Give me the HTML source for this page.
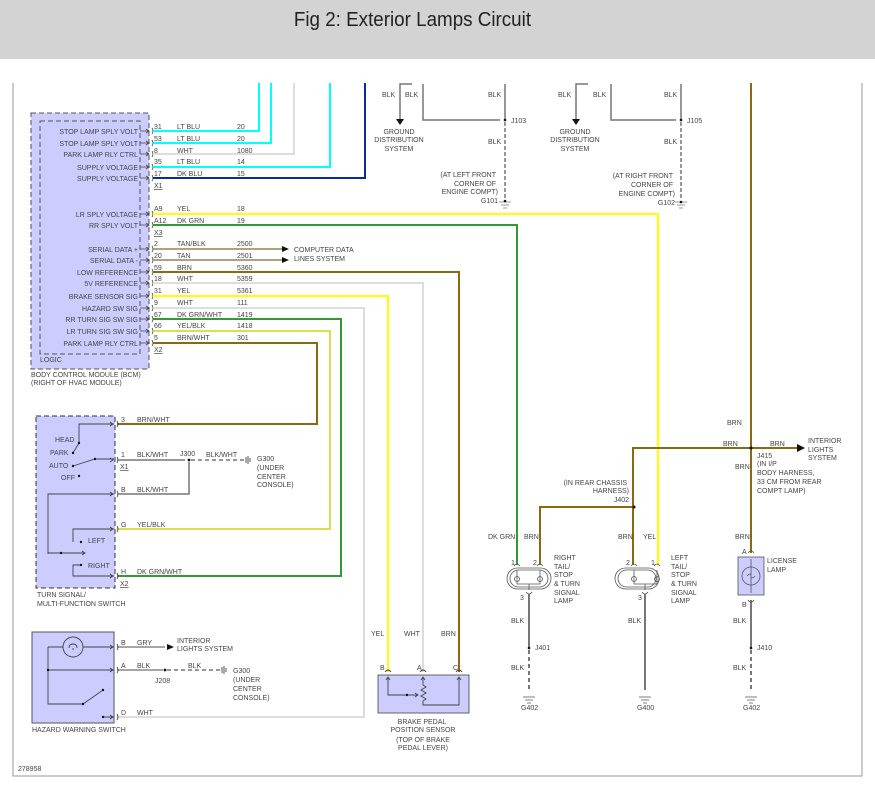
<!DOCTYPE html>
<html><head><meta charset="utf-8"><style>
html,body{margin:0;padding:0;background:#fff;width:875px;height:797px;overflow:hidden}
#hdr{position:absolute;left:0;top:0;width:875px;height:59px;background:#d3d3d3}
#ttl{position:absolute;left:0;width:825px;top:9px;text-align:center;font:20px "Liberation Sans Narrow","Liberation Sans",sans-serif;color:#222;transform:scaleX(0.94);transform-origin:412px 0}
svg{position:absolute;left:0;top:0}
text{font-family:"Liberation Sans",sans-serif;font-size:7px;fill:#444}
.r{text-anchor:end}.m{text-anchor:middle}
</style></head><body>
<div id="hdr"><div id="ttl">Fig 2: Exterior Lamps Circuit</div></div>
<svg width="875" height="797" viewBox="0 0 875 797">
<path d="M13 83V776H862V83" fill="none" stroke="#999" stroke-width="1"/>
<rect x="31" y="113" width="118" height="256" fill="#ccccff" stroke="#555" stroke-dasharray="5,3"/>
<rect x="40" y="121" width="100" height="233" fill="none" stroke="#555" stroke-dasharray="5,3"/>
<text x="40" y="362">LOGIC</text>
<text x="31" y="377">BODY CONTROL MODULE (BCM)</text>
<text x="31" y="385">(RIGHT OF HVAC MODULE)</text>
<g class="r">
<text class="r" x="138" y="134">STOP LAMP SPLY VOLT</text>
<text class="r" x="138" y="146">STOP LAMP SPLY VOLT</text>
<text class="r" x="138" y="157">PARK LAMP RLY CTRL</text>
<text class="r" x="138" y="170">SUPPLY VOLTAGE</text>
<text class="r" x="138" y="181">SUPPLY VOLTAGE</text>
<text class="r" x="138" y="217">LR SPLY VOLTAGE</text>
<text class="r" x="138" y="228">RR SPLY VOLT</text>
<text class="r" x="138" y="252">SERIAL DATA +</text>
<text class="r" x="138" y="263">SERIAL DATA -</text>
<text class="r" x="138" y="275">LOW REFERENCE</text>
<text class="r" x="138" y="286">5V REFERENCE</text>
<text class="r" x="138" y="299">BRAKE SENSOR SIG</text>
<text class="r" x="138" y="311">HAZARD SW SIG</text>
<text class="r" x="138" y="322">RR TURN SIG SW SIG</text>
<text class="r" x="138" y="334">LR TURN SIG SW SIG</text>
<text class="r" x="138" y="346">PARK LAMP RLY CTRL</text>
</g>
<g stroke="#444" fill="none" stroke-width="0.8">
<path d="M140 131h9M146 129l3 2-3 2M152 128q2 3 0 6M140 143h9M146 141l3 2-3 2M152 140q2 3 0 6M140 154h9M146 152l3 2-3 2M152 151q2 3 0 6M140 167h9M146 165l3 2-3 2M152 164q2 3 0 6M140 178h9M146 176l3 2-3 2M152 175q2 3 0 6M140 214h9M146 212l3 2-3 2M152 211q2 3 0 6M140 225h9M146 223l3 2-3 2M152 222q2 3 0 6M140 249h9M146 247l3 2-3 2M152 246q2 3 0 6M140 260h9M146 258l3 2-3 2M152 257q2 3 0 6M140 272h9M146 270l3 2-3 2M152 269q2 3 0 6M140 283h9M146 281l3 2-3 2M152 280q2 3 0 6M140 296h9M146 294l3 2-3 2M152 293q2 3 0 6M140 308h9M146 306l3 2-3 2M152 305q2 3 0 6M140 319h9M146 317l3 2-3 2M152 316q2 3 0 6M140 331h9M146 329l3 2-3 2M152 328q2 3 0 6M140 343h9M146 341l3 2-3 2M152 340q2 3 0 6"/>
</g>
<g fill="none" stroke-width="2">
<path d="M153 131H259V83" stroke="#00ffff"/>
<path d="M153 143H271V83" stroke="#00ffff"/>
<path d="M153 154H294V83" stroke="#ddd"/>
<path d="M153 167H330V83" stroke="#00ffff"/>
<path d="M153 178H365V83" stroke="#0a2a9a"/>
<path d="M153 214H658V565" stroke="#ffff00"/>
<path d="M153 225H517V565" stroke="#339933"/>
<path d="M153 249H282" stroke="#9a8050" stroke-width="1.5"/>
<path d="M153 260H282" stroke="#9a8050" stroke-width="1.5"/>
<path d="M153 272H459V672" stroke="#8b6914"/>
<path d="M153 283H423V672" stroke="#ddd"/>
<path d="M153 296H388V672" stroke="#ffff00"/>
<path d="M153 308H364V717H117" stroke="#ddd"/>
<path d="M153 319H341V576H117" stroke="#339933"/>
<path d="M153 331H330V529H117" stroke="#dddd55"/>
<path d="M153 343H317V424H117" stroke="#8b6914"/>
</g>
<path d="M282 246l7 3-7 3zM282 257l7 3-7 3z" fill="#111"/>
<text x="294" y="252">COMPUTER DATA</text><text x="294" y="261">LINES SYSTEM</text>
<g>
<text x="154" y="129">31</text><text x="177" y="129">LT BLU</text><text x="237" y="129">20</text>
<text x="154" y="141">53</text><text x="177" y="141">LT BLU</text><text x="237" y="141">20</text>
<text x="154" y="153">8</text><text x="177" y="153">WHT</text><text x="237" y="153">1080</text>
<text x="154" y="164">35</text><text x="177" y="164">LT BLU</text><text x="237" y="164">14</text>
<text x="154" y="176">17</text><text x="177" y="176">DK BLU</text><text x="237" y="176">15</text>
<text x="154" y="188" text-decoration="underline">X1</text>
<text x="154" y="211">A9</text><text x="177" y="211">YEL</text><text x="237" y="211">18</text>
<text x="154" y="223">A12</text><text x="177" y="223">DK GRN</text><text x="237" y="223">19</text>
<text x="154" y="235" text-decoration="underline">X3</text>
<text x="154" y="246">2</text><text x="177" y="246">TAN/BLK</text><text x="237" y="246">2500</text>
<text x="154" y="258">20</text><text x="177" y="258">TAN</text><text x="237" y="258">2501</text>
<text x="154" y="270">59</text><text x="177" y="270">BRN</text><text x="237" y="270">5360</text>
<text x="154" y="281">18</text><text x="177" y="281">WHT</text><text x="237" y="281">5359</text>
<text x="154" y="293">31</text><text x="177" y="293">YEL</text><text x="237" y="293">5361</text>
<text x="154" y="305">9</text><text x="177" y="305">WHT</text><text x="237" y="305">111</text>
<text x="154" y="317">67</text><text x="177" y="317">DK GRN/WHT</text><text x="237" y="317">1419</text>
<text x="154" y="328">66</text><text x="177" y="328">YEL/BLK</text><text x="237" y="328">1418</text>
<text x="154" y="340">5</text><text x="177" y="340">BRN/WHT</text><text x="237" y="340">301</text>
<text x="154" y="352" text-decoration="underline">X2</text>
</g>
<g fill="none" stroke="#777" stroke-width="1.5">
<path d="M400 120V84H412M423 84V120H500M505 84V120M576 120V84H588M611 84V120H676M681 84V120"/>
<path d="M505 122V200M681 122V200" stroke-dasharray="4,2"/>
<path d="M499 202h12M501 205h8M503 208h4M675 202h12M677 205h8M679 208h4" stroke-width="0.8"/>
</g>
<path d="M396 119h8l-4 6zM572 119h8l-4 6z" fill="#111"/>
<circle cx="505" cy="120" r="1.3" fill="#111"/><circle cx="681" cy="120" r="1.3" fill="#111"/>
<circle cx="505" cy="201" r="1.3" fill="#111"/><circle cx="681" cy="202" r="1.3" fill="#111"/>
<text x="382" y="97">BLK</text><text x="405" y="97">BLK</text><text x="488" y="97">BLK</text>
<text x="558" y="97">BLK</text><text x="593" y="97">BLK</text><text x="664" y="97">BLK</text>
<text class="m" x="399" y="134">GROUND</text><text class="m" x="399" y="142">DISTRIBUTION</text><text class="m" x="399" y="151">SYSTEM</text>
<text class="m" x="575" y="134">GROUND</text><text class="m" x="575" y="142">DISTRIBUTION</text><text class="m" x="575" y="151">SYSTEM</text>
<text x="511" y="123">J103</text><text x="687" y="123">J105</text>
<text x="488" y="144">BLK</text><text x="664" y="144">BLK</text>
<text class="r" x="496" y="177">(AT LEFT FRONT</text><text class="r" x="496" y="186">CORNER OF</text><text class="r" x="498" y="194">ENGINE COMPT)</text><text class="r" x="498" y="203">G101</text>
<text class="r" x="673" y="178">(AT RIGHT FRONT</text><text class="r" x="673" y="187">CORNER OF</text><text class="r" x="675" y="196">ENGINE COMPT)</text><text class="r" x="675" y="205">G102</text>
<g fill="none" stroke-width="2">
<path d="M751 83V553" stroke="#8b6914"/>
<path d="M797 448H633V565M633 507H540V565" stroke="#8b6914"/>
<path d="M529 594V648M751 600V648" stroke="#777"/>
<path d="M645 594V690" stroke="#777"/>
<path d="M529 650V690M751 650V690" stroke="#777" stroke-dasharray="4,3"/>
</g>
<path d="M797 444l8 4-8 4z" fill="#111"/>
<g fill="#111"><circle cx="751" cy="448" r="1.5"/><circle cx="634" cy="507" r="1.5"/><circle cx="529" cy="648" r="1.3"/><circle cx="751" cy="648" r="1.3"/></g>
<g fill="none" stroke="#555" stroke-width="0.8"><path d="M523 697h12M525 700h8M527 703h4M639 697h12M641 700h8M643 703h4M745 697h12M747 700h8M749 703h4"/></g>
<text x="727" y="425">BRN</text>
<text x="723" y="446">BRN</text><text x="770" y="446">BRN</text>
<text x="808" y="443">INTERIOR</text><text x="808" y="452">LIGHTS</text><text x="808" y="460">SYSTEM</text>
<text x="757" y="458">J415</text><text x="757" y="466">(IN I/P</text><text x="757" y="475">BODY HARNESS,</text><text x="757" y="484">33 CM FROM REAR</text><text x="757" y="493">COMPT LAMP)</text>
<text x="735" y="469">BRN</text>
<text class="r" x="627" y="485">(IN REAR CHASSIS</text><text class="r" x="629" y="493">HARNESS)</text><text class="r" x="629" y="502">J402</text>
<text x="488" y="539">DK GRN</text><text x="524" y="539">BRN</text><text x="618" y="539">BRN</text><text x="643" y="539">YEL</text><text x="735" y="539">BRN</text>
<g fill="none" stroke="#555" stroke-width="0.8">
<rect x="507" y="568" width="44" height="21" rx="10.5"/><rect x="510" y="570" width="38" height="17" rx="8.5"/>
<path d="M514 566q3-4 6 0M537 566q3-4 6 0M526 592q3 4 6 0M517 570v14h23v-14M529 584v6"/>
<circle cx="517" cy="579" r="2.5"/><circle cx="540" cy="579" r="2.5"/>
<rect x="615" y="568" width="44" height="21" rx="10.5"/><rect x="618" y="570" width="38" height="17" rx="8.5"/>
<path d="M631 566q3-4 6 0M654 566q3-4 6 0M642 592q3 4 6 0M634 570v14h23v-14M645 584v6"/>
<circle cx="634" cy="579" r="2.5"/><circle cx="657" cy="579" r="2.5"/>
</g>
<text x="511" y="565">1</text><text x="533" y="565">2</text><text x="520" y="600">3</text>
<text x="626" y="565">2</text><text x="651" y="565">1</text><text x="638" y="600">3</text>
<text x="554" y="560">RIGHT</text><text x="554" y="569">TAIL/</text><text x="554" y="577">STOP</text><text x="554" y="586">&amp; TURN</text><text x="554" y="595">SIGNAL</text><text x="554" y="603">LAMP</text>
<text x="671" y="560">LEFT</text><text x="671" y="569">TAIL/</text><text x="671" y="577">STOP</text><text x="671" y="586">&amp; TURN</text><text x="671" y="595">SIGNAL</text><text x="671" y="603">LAMP</text>
<rect x="738" y="557" width="26" height="38" fill="#ccccff" stroke="#555" stroke-width="0.8"/>
<circle cx="751" cy="576" r="9" fill="none" stroke="#555" stroke-width="0.8"/>
<path d="M751 559v34M748 553q3-4 6 0M748 600q3 4 6 0M747 576q4-4 4 0t4 0" fill="none" stroke="#555" stroke-width="0.8"/>
<text x="742" y="554">A</text><text x="742" y="607">B</text>
<text x="767" y="563">LICENSE</text><text x="767" y="572">LAMP</text>
<text x="511" y="623">BLK</text><text x="628" y="623">BLK</text><text x="733" y="623">BLK</text>
<text x="535" y="650">J401</text><text x="757" y="650">J410</text>
<text x="511" y="670">BLK</text><text x="733" y="670">BLK</text>
<text x="521" y="710">G402</text><text x="637" y="710">G400</text><text x="743" y="710">G402</text>
<rect x="36" y="416" width="79" height="172" fill="#ccccff" stroke="#333" stroke-dasharray="5,3"/>
<g fill="none" stroke="#444" stroke-width="0.9">
<path d="M73 453L79 443V424H114M73 466L95 459H114M48 554V494H114M48 553H85M73 542V529H114M81 565H73V576H114"/>
<path d="M110 422l3 2-3 2M110 458l3 2-3 2M110 492l3 2-3 2M110 527l3 2-3 2M110 574l3 2-3 2M82 551l3 2-3 2"/>
<path d="M117 421q2 3 0 6M117 457q2 3 0 6M117 491q2 3 0 6M117 526q2 3 0 6M117 573q2 3 0 6"/>
</g>
<g fill="#111"><circle cx="79" cy="443" r="1.2"/><circle cx="73" cy="453" r="1.2"/><circle cx="73" cy="466" r="1.2"/><circle cx="95" cy="459" r="1.2"/><circle cx="79" cy="476" r="1.2"/><circle cx="81" cy="542" r="1.2"/><circle cx="81" cy="565" r="1.2"/><circle cx="61" cy="553" r="1.2"/></g>
<text x="55" y="442">HEAD</text><text x="50" y="455">PARK</text><text x="49" y="468">AUTO</text><text x="61" y="480">OFF</text>
<text x="88" y="543">LEFT</text><text x="88" y="568">RIGHT</text>
<text x="37" y="597">TURN SIGNAL/</text><text x="37" y="606">MULTI-FUNCTION SWITCH</text>
<g fill="none" stroke="#777" stroke-width="1.5"><path d="M117 460H185M117 494H189V462"/><path d="M191 460H246M167 670H222" stroke-dasharray="4,3"/><path d="M117 670H163M117 647H165" stroke="#888"/></g>
<circle cx="189" cy="460" r="1.4" fill="#111"/><circle cx="165" cy="670" r="1.4" fill="#111"/>
<path d="M246 457v6M248 456v8M250 458v4M222 667v6M224 666v8M226 668v4" stroke="#444" stroke-width="0.9"/>
<text x="121" y="422">3</text><text x="137" y="422">BRN/WHT</text>
<text x="121" y="457">1</text><text x="137" y="457">BLK/WHT</text><text x="180" y="456">J300</text><text x="206" y="457">BLK/WHT</text>
<text x="120" y="469" text-decoration="underline">X1</text>
<text x="257" y="461">G300</text><text x="257" y="470">(UNDER</text><text x="257" y="479">CENTER</text><text x="257" y="487">CONSOLE)</text>
<text x="121" y="492">B</text><text x="137" y="492">BLK/WHT</text>
<text x="121" y="527">G</text><text x="137" y="527">YEL/BLK</text>
<text x="121" y="574">H</text><text x="137" y="574">DK GRN/WHT</text>
<text x="120" y="586" text-decoration="underline">X2</text>
<rect x="32" y="632" width="82" height="91" fill="#ccccff" stroke="#555" stroke-width="1"/>
<g fill="none" stroke="#444" stroke-width="0.9">
<circle cx="73" cy="647" r="10"/><path d="M69 648q0-4 4-4t4 4M73 648v2"/>
<path d="M48 647H63M83 647H114M48 647V704H83L103 690M48 670H114M103 717H114"/>
<path d="M110 645l3 2-3 2M110 668l3 2-3 2M110 715l3 2-3 2"/>
<path d="M117 644q2 3 0 6M117 667q2 3 0 6M117 714q2 3 0 6"/>
</g>
<g fill="#111"><circle cx="48" cy="670" r="1.2"/><circle cx="83" cy="704" r="1.2"/><circle cx="103" cy="690" r="1.2"/><circle cx="103" cy="717" r="1.2"/></g>
<path d="M167 644l7 3-7 3z" fill="#111"/>
<text x="121" y="645">B</text><text x="137" y="645">GRY</text>
<text x="177" y="643">INTERIOR</text><text x="177" y="651">LIGHTS SYSTEM</text>
<text x="121" y="668">A</text><text x="137" y="668">BLK</text><text x="188" y="668">BLK</text>
<text x="155" y="683">J208</text>
<text x="233" y="673">G300</text><text x="233" y="682">(UNDER</text><text x="233" y="691">CENTER</text><text x="233" y="700">CONSOLE)</text>
<text x="121" y="715">D</text><text x="137" y="715">WHT</text>
<text x="32" y="732">HAZARD WARNING SWITCH</text>
<text x="371" y="636">YEL</text><text x="404" y="636">WHT</text><text x="441" y="636">BRN</text>
<rect x="378" y="675" width="91" height="38" fill="#ccccff" stroke="#555" stroke-width="0.9"/>
<g fill="none" stroke="#444" stroke-width="0.9">
<path d="M385 672q3-4 6 0M420 672q3-4 6 0M456 672q3-4 6 0"/>
<path d="M388 677V695H418M423 677V685l3 2-5 3 5 3-5 3 5 3-3 2V705H459V677M386 680l2-3 2 3M421 680l2-3 2 3M457 680l2-3 2 3M415 693l3 2-3 2"/>
</g>
<circle cx="407" cy="695" r="1.2" fill="#111"/>
<text x="380" y="670">B</text><text x="417" y="670">A</text><text x="453" y="670">C</text>
<text class="m" x="422" y="724">BRAKE PEDAL</text><text class="m" x="423" y="732">POSITION SENSOR</text><text class="m" x="423" y="742">(TOP OF BRAKE</text><text class="m" x="423" y="750">PEDAL LEVER)</text>
<text x="18" y="771">278958</text>
</svg>
</body></html>
